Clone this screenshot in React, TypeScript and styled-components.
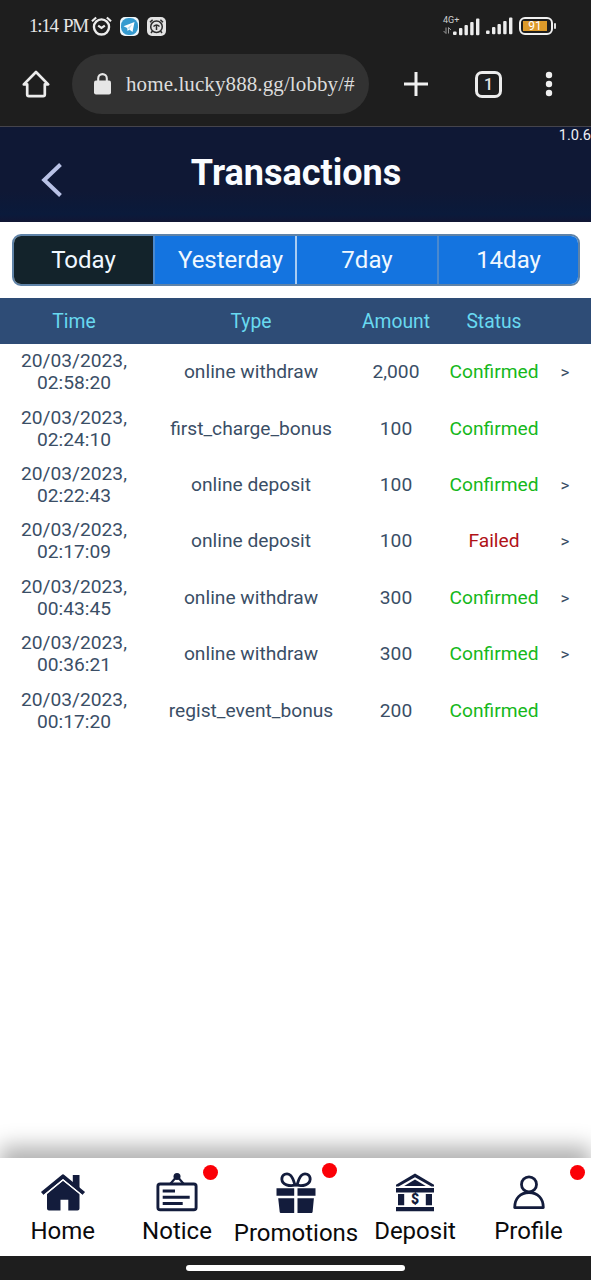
import React from "react";
import styled, { createGlobalStyle } from "styled-components";

const GlobalStyle = createGlobalStyle`
  * { box-sizing: border-box; }
  body { margin: 0; background: #fff; font-family: Roboto, "Liberation Sans", sans-serif; }
`;

const Screen = styled.div`
  display: flex;
  flex-direction: column;
  width: 591px;
  height: 1280px;
  overflow: hidden;
  background: #fff;
`;

const Icon = styled.svg`
  display: block;
  flex: none;
  overflow: visible;
`;

const Chrome = styled.header`
  flex: none;
  height: 127px;
  background: #1e1e1e;
  border-bottom: 1px solid #45444c;
  color: #e6e6e6;
`;

const StatusBar = styled.div`
  display: flex;
  align-items: center;
  height: 52px;
  padding: 0 38px 0 29px;
`;

const Clock = styled.span`
  width: 62px;
  font: 19px/24px "Liberation Serif", serif;
  letter-spacing: -1.3px;
  word-spacing: 2px;
  white-space: nowrap;
`;

const StatusIcons = styled.div`
  display: flex;
  align-items: center;
  gap: 8px;
`;

const Signals = styled.div`
  display: flex;
  align-items: center;
  margin-left: auto;
  gap: 6px;
`;

const Network = styled.div`
  display: flex;
  align-items: flex-end;
`;

const NetworkLabel = styled.div`
  display: flex;
  flex-direction: column;
  gap: 3px;
  width: 10px;
  height: 20px;
  font: 9px/8px Roboto, sans-serif;
  color: #d0d0d0;
  white-space: nowrap;
`;

const Battery = styled.div`
  position: relative;
  width: 34px;
  height: 18px;
  padding: 2px;
  border: 2px solid #f0f0f0;
  border-radius: 6px;

  &::after {
    content: "";
    position: absolute;
    right: -5px;
    top: 4px;
    width: 2px;
    height: 6px;
    border-radius: 1px;
    background: #ddd;
  }
`;

const BatteryFill = styled.div`
  width: 24px;
  height: 10px;
  background: #dd9a2a;
  color: #fff;
  font: 12px/10px Roboto, sans-serif;
  text-align: center;
`;

const AddressBar = styled.div`
  display: flex;
  align-items: center;
  height: 64px;
  padding-left: 22px;
`;

const UrlPill = styled.div`
  display: flex;
  align-items: center;
  gap: 15px;
  width: 297px;
  height: 60px;
  margin: 0 34px 0 22px;
  padding-left: 22px;
  border-radius: 30px;
  background: #323232;
`;

const Url = styled.span`
  font: 21px/26px "Liberation Serif", serif;
  letter-spacing: 0.1px;
  color: #dcdcdc;
  white-space: nowrap;
`;

const TabCount = styled.div`
  width: 27px;
  height: 27px;
  margin: 0 44px 0 46px;
  border: 3px solid #ececec;
  border-radius: 7px;
  font: 500 16px/21px Roboto, sans-serif;
  text-align: center;
`;

const PageHeader = styled.div`
  position: relative;
  display: grid;
  grid-template-columns: 103px 1fr 102px;
  flex: none;
  height: 95px;
  background: linear-gradient(#0f1835 0 68%, #0a1a3b 92%, #111634);
`;

const BackButton = styled.button`
  display: flex;
  align-items: flex-start;
  padding: 36px 0 0 41px;
  border: 0;
  background: none;
`;

const Title = styled.h1`
  margin: 25px 0 0;
  font-size: 36px;
  line-height: 42px;
  font-weight: 700;
  text-align: center;
  color: #fafcff;
`;

const Version = styled.span`
  position: absolute;
  top: -1px;
  right: 0;
  font-size: 14.6px;
  line-height: 18px;
  color: #eef0f5;
`;

const Tabs = styled.div`
  display: grid;
  grid-template-columns: 141px 142px 142px 1fr;
  flex: none;
  height: 52px;
  margin: 12px 11px 12px 12px;
  border: 2px solid #5f83a8;
  border-radius: 9px;
  overflow: hidden;
`;

const Tab = styled.button<{ $active?: boolean; $bright?: boolean; $shift?: number }>`
  min-width: 0;
  padding: 0 0 0 ${(p) => p.$shift ?? 0}px;
  border: 0;
  border-right: 2px solid ${(p) => (p.$bright ? "#a9ccf2" : "#4a89cf")};
  background: ${(p) => (p.$active ? "#13232b" : "#1474e0")};
  color: #f0f8ff;
  font: 24px/28px Roboto, sans-serif;

  &:last-child { border-right: 0; }
`;

const columns = "148px 206px 84px 112px 30px";

const TableHead = styled.div`
  display: grid;
  grid-template-columns: ${columns};
  align-items: center;
  flex: none;
  height: 46px;
  background: #2e4c76;
  color: #69d9f0;
  font-size: 19.3px;
  text-align: center;
`;

const TableBody = styled.div`
  flex: 1;
  padding-top: 0.1px;
`;

const Row = styled.div`
  display: grid;
  grid-template-columns: ${columns};
  align-items: center;
  height: 56.4px;
  color: #3a4e66;
  font-size: 19.2px;
  line-height: 22px;
  text-align: center;
`;

const Status = styled.span<{ $failed: boolean }>`
  color: ${(p) => (p.$failed ? "#b01217" : "#16b81b")};
`;

const Arrow = styled.span`
  font-size: 17px;
`;

const NavBar = styled.nav`
  display: grid;
  grid-template-columns: 114.5px 114px 124px 114px 113px;
  flex: none;
  height: 98px;
  padding-left: 5.5px;
  background: #fff;
  box-shadow: 0 -12px 20px rgba(0, 0, 0, 0.3);
`;

const NavItem = styled.a<{ $drop?: number }>`
  position: relative;
  display: flex;
  flex-direction: column;
  align-items: center;
  padding-top: 14px;
  gap: ${(p) => 3 + (p.$drop ?? 0)}px;
  color: #0a0a0c;
  font-size: 24px;
  line-height: 28px;
`;

const Dot = styled.i<{ $x: number; $y: number }>`
  position: absolute;
  left: ${(p) => p.$x}px;
  top: ${(p) => p.$y}px;
  width: 15px;
  height: 15px;
  border-radius: 50%;
  background: #fb0007;
`;

const GestureBar = styled.footer`
  position: relative;
  display: flex;
  justify-content: center;
  flex: none;
  height: 24px;
  padding-top: 9px;
  background: #1e1e1e;
`;

const Handle = styled.div`
  width: 219px;
  height: 6px;
  border-radius: 3px;
  background: #fff;
`;

const navy = "#131c3c";

const AlarmIcon = () => (
  <Icon width="21" height="20" viewBox="0 0 22 20" fill="none" stroke="#ececec">
    <circle cx="11" cy="11" r="7.9" strokeWidth="2.5" />
    <path d="M1 5 5.4 1M21 5 16.6 1" strokeWidth="2.2" />
    <path d="M7.5 9.5 11 12l3.5-2.5" strokeWidth="2.2" />
  </Icon>
);

const TelegramIcon = () => (
  <Icon width="19" height="19" viewBox="0 0 19 19">
    <rect width="19" height="19" rx="5" fill="#eef8fd" />
    <rect x="1" y="1" width="17" height="17" rx="7.5" fill="#369bd0" />
    <path d="m3.5 9.2 11-4.3-2 10-3.2-2.4-1.7 1.6-.4-3z" fill="#fff" />
    <path d="m7.2 11 5.2-4-3.2 5.2" fill="#b9dff2" />
  </Icon>
);

const ClockAppIcon = () => (
  <Icon width="19" height="19" viewBox="0 0 19 19">
    <rect width="19" height="19" rx="5" fill="#e3e3e3" />
    <g fill="none" stroke="#2c2c2c" strokeWidth="1.5">
      <circle cx="9.5" cy="9.7" r="5.8" />
      <path d="M3 5.2 5.6 2.7M16 5.2l-2.6-2.5M5.5 14 4 16M13.5 14l1.5 2M9.5 8v5M6.5 9.5q3-3 6 0" />
    </g>
  </Icon>
);

const SignalIcon = () => (
  <Icon width="27" height="18" viewBox="0 0 27 18" fill="#ededed">
    <rect x="0" y="13.5" width="3.6" height="3.6" rx="1" />
    <rect x="6" y="10" width="3.4" height="7.3" rx="1" />
    <rect x="11.5" y="7" width="3.4" height="10.3" rx="1" />
    <rect x="17.2" y="4" width="3.4" height="13.3" rx="1" />
    <rect x="23" y="0.5" width="3.4" height="16.8" rx="1" />
  </Icon>
);

const DataIcon = () => (
  <Icon width="9" height="7" viewBox="0 0 9 7" fill="none" stroke="#999" strokeWidth="1">
    <path d="M3 .5v6L.6 4M5.5 6.5v-6L8 3" />
  </Icon>
);

const BrowserHomeIcon = () => (
  <Icon width="28" height="28" viewBox="0 0 28 28" fill="none" stroke="#ececec" strokeWidth="2.7" strokeLinejoin="round">
    <path d="M1.8 14.4 14 2l12.2 12.4h-3.4v10.1q0 1.7-1.7 1.7H6.9q-1.7 0-1.7-1.7V14.4z" />
  </Icon>
);

const LockIcon = () => (
  <Icon width="17" height="22" viewBox="0 0 17 22">
    <rect y="7.5" width="17" height="14" rx="2" fill="#e6e6e6" />
    <path d="M4.2 9V5.4a4.3 4.3 0 0 1 8.6 0V9" fill="none" stroke="#e6e6e6" strokeWidth="2.1" />
  </Icon>
);

const HomeIcon = () => (
  <Icon width="46" height="42" viewBox="0 0 46 42" fill={navy}>
    <path d="M32.8 3h6.7v14l-6.7-6.2z" />
    <path d="M2.3 21.5 23 4.5l20.7 17" fill="none" stroke={navy} strokeWidth="4.2" strokeLinejoin="round" />
    <path d="M7 22 23 8.8 39.5 22v14.5q0 2-2 2h-9.2V27.8h-7.8v10.7H9q-2 0-2-2z" />
    <path d="M4 23.3 23 7.8l19 15.5" fill="none" stroke="#fff" strokeWidth="1.3" />
  </Icon>
);

const NoticeIcon = () => (
  <Icon width="42" height="42" viewBox="0 0 42 42" fill="none" stroke={navy}>
    <rect x="1.9" y="12" width="38.2" height="25.8" rx="2.3" strokeWidth="2.9" />
    <circle cx="21" cy="4.5" r="3.5" fill={navy} stroke="none" />
    <path d="m14.2 12 5.6-6.5h2.4l5.6 6.5" strokeWidth="2.2" />
    <path d="M8.2 19h9.3M8.2 25.3h24M8.2 31.4h17" strokeWidth="3" strokeLinecap="square" />
  </Icon>
);

const GiftIcon = () => (
  <Icon width="40" height="42" viewBox="0 0 40 42" fill={navy}>
    <path d="M.5 16.2h17.7v7.6H.5zM21.5 16.2h18v7.6h-18zM2.2 26.2h16v14.7H4.5q-.7 0-.8-.8zM21.5 26.2h16.4l-1.3 13.9q-.1.8-.8.8H21.5z" />
    <g fill="none" stroke={navy} strokeWidth="2.8">
      <path d="M19 13.2C13.5 14.4 6.2 13 5.8 7.2 5.7 2.1 11.2.4 14.4 3.2 17.1 5.6 17.8 9 19 13.2Z" />
      <path d="M21 13.2c5.5 1.2 12.8-.2 13.2-6 .1-5.1-5.4-6.8-8.6-4C22.9 5.6 22.2 9 21 13.2Z" />
    </g>
  </Icon>
);

const BankIcon = () => (
  <Icon width="38" height="42" viewBox="0 0 38 42" fill={navy}>
    <path d="M0 12.8 19 1.6l19 11.2v1.6h-2.6L19 5.2 2.6 14.4H0z" />
    <path d="M8.2 14 19 7.6 29.8 14z" />
    <path d="M0 16h38v4.4H0zM2 22h6.2v11.2H2zM29.8 22H36v11.2h-6.2zM0 34.9h38v4.4H0z" />
    <text x="19" y="32.4" textAnchor="middle" fontFamily="Roboto, sans-serif" fontSize="14" fontWeight="900">$</text>
  </Icon>
);

const ProfileIcon = () => (
  <Icon width="32" height="42" viewBox="0 0 32 42" fill="none" stroke={navy} strokeWidth="2.8" strokeLinejoin="round">
    <circle cx="16" cy="12.4" r="7.5" />
    <path d="M1.7 35.6h28.6c0-9.4-5.6-14.9-14.3-14.9S1.7 26.2 1.7 35.6Z" />
  </Icon>
);

const rows = [
  ["02:58:20", "online withdraw", "2,000", "Confirmed", true],
  ["02:24:10", "first_charge_bonus", "100", "Confirmed", false],
  ["02:22:43", "online deposit", "100", "Confirmed", true],
  ["02:17:09", "online deposit", "100", "Failed", true],
  ["00:43:45", "online withdraw", "300", "Confirmed", true],
  ["00:36:21", "online withdraw", "300", "Confirmed", true],
  ["00:17:20", "regist_event_bonus", "200", "Confirmed", false],
] as const;

export default function App() {
  return (
    <Screen>
      <GlobalStyle />
      <Chrome>
        <StatusBar>
          <Clock>1:14 PM</Clock>
          <StatusIcons>
            <AlarmIcon />
            <TelegramIcon />
            <ClockAppIcon />
          </StatusIcons>
          <Signals>
            <Network>
              <NetworkLabel>
                <span>4G+</span>
                <DataIcon />
              </NetworkLabel>
              <SignalIcon />
            </Network>
            <SignalIcon />
            <Battery>
              <BatteryFill>91</BatteryFill>
            </Battery>
          </Signals>
        </StatusBar>
        <AddressBar>
          <BrowserHomeIcon />
          <UrlPill>
            <LockIcon />
            <Url>home.lucky888.gg/lobby/#</Url>
          </UrlPill>
          <Icon width="26" height="26" viewBox="0 0 26 26" stroke="#f0f0f0" strokeWidth="3">
            <path d="M13 1v24M1 13h24" />
          </Icon>
          <TabCount>1</TabCount>
          <Icon width="6" height="26" viewBox="0 0 6 26" fill="#f0f0f0">
            <circle cx="3" cy="4" r="3.2" />
            <circle cx="3" cy="13" r="3.2" />
            <circle cx="3" cy="22" r="3.2" />
          </Icon>
        </AddressBar>
      </Chrome>

      <PageHeader>
        <BackButton aria-label="Back">
          <Icon width="22" height="34" viewBox="0 0 22 34" fill="none" stroke="#b9c2e6" strokeWidth="4">
            <path d="M19.5 1.5 3.2 17l16.3 15.5" />
          </Icon>
        </BackButton>
        <Title>Transactions</Title>
        <Version>1.0.6</Version>
      </PageHeader>

      <Tabs>
        <Tab $active>Today</Tab>
        <Tab $bright $shift={11}>Yesterday</Tab>
        <Tab>7day</Tab>
        <Tab>14day</Tab>
      </Tabs>

      <TableHead>
        <span>Time</span>
        <span>Type</span>
        <span>Amount</span>
        <span>Status</span>
      </TableHead>
      <TableBody>
        {rows.map(([time, type, amount, status, more]) => (
          <Row key={time}>
            <span>
              20/03/2023,
              <br />
              {time}
            </span>
            <span>{type}</span>
            <span>{amount}</span>
            <Status $failed={status === "Failed"}>{status}</Status>
            {more && <Arrow>&gt;</Arrow>}
          </Row>
        ))}
      </TableBody>

      <NavBar>
        <NavItem>
          <HomeIcon />
          Home
        </NavItem>
        <NavItem>
          <NoticeIcon />
          Notice
          <Dot $x={83} $y={7} />
        </NavItem>
        <NavItem $drop={2}>
          <GiftIcon />
          Promotions
          <Dot $x={88} $y={5} />
        </NavItem>
        <NavItem>
          <BankIcon />
          Deposit
        </NavItem>
        <NavItem>
          <ProfileIcon />
          Profile
          <Dot $x={98} $y={7} />
        </NavItem>
      </NavBar>
      <GestureBar>
        <Handle />
      </GestureBar>
    </Screen>
  );
}
